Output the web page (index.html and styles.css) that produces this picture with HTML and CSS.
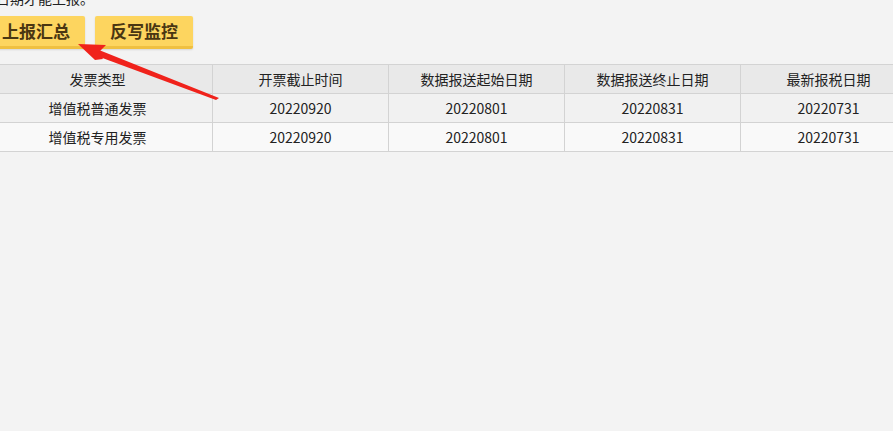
FILE: index.html
```html
<!DOCTYPE html>
<html lang="zh">
<head>
<meta charset="utf-8">
<link rel="stylesheet" href="styles.css">
</head>
<body>
<div class="page">
  <p class="note">日期才能上报。</p>
  <div class="actions">
    <button class="btn">上报汇总</button>
    <button class="btn">反写监控</button>
  </div>
  <table class="grid">
    <colgroup>
      <col class="c-first"><col class="c"><col class="c"><col class="c"><col class="c">
    </colgroup>
    <thead>
      <tr><th>发票类型</th><th>开票截止时间</th><th>数据报送起始日期</th><th>数据报送终止日期</th><th>最新报税日期</th></tr>
    </thead>
    <tbody>
      <tr class="odd"><td>增值税普通发票</td><td>20220920</td><td>20220801</td><td>20220831</td><td>20220731</td></tr>
      <tr class="even"><td>增值税专用发票</td><td>20220920</td><td>20220801</td><td>20220831</td><td>20220731</td></tr>
    </tbody>
  </table>
</div>
<svg class="arrow" width="893" height="431" viewBox="0 0 893 431">
  <polygon points="219,98 99,50 97,56 216,100" fill="#f0221b"/>
  <polygon points="78,44 106,45 99,52 103,59 95,60" fill="#f0221b"/>
</svg>
</body>
</html>
```

FILE: styles.css
```css
html, body {
  margin: 0;
  padding: 0;
}
body {
  background: #f3f3f3;
  font-family: "Microsoft YaHei", "Noto Sans CJK SC", "Noto Sans", sans-serif;
  color: #222;
  width: 893px;
  height: 431px;
  overflow: hidden;
  position: relative;
}
.page {
  margin-left: -18px;
}
.note {
  margin: -12px 0 0 14px;
  font-size: 14px;
  line-height: 20px;
  color: #222;
  height: 20px;
}
.actions {
  display: flex;
  gap: 10px;
  margin: 8px 0 0 5px;
}
.btn {
  height: 33px;
  padding: 0 15px;
  border: none;
  border-bottom: 3px solid #f0c040;
  border-radius: 2px;
  background: #fdd55f;
  color: #4a3612;
  font-family: "Microsoft YaHei", "Noto Sans CJK SC", sans-serif;
  font-size: 17px;
  font-weight: bold;
  line-height: 30px;
  box-shadow: 0 1px 2px rgba(0,0,0,0.12);
}
.grid {
  margin-top: 15px;
  border-collapse: collapse;
  table-layout: fixed;
  width: 934px;
  font-size: 14px;
  color: #222;
}
.c-first { width: 230px; }
.c { width: 176px; }
.grid th, .grid td {
  height: 28px;
  padding: 0;
  border: 1px solid #d3d3d3;
  text-align: center;
  font-weight: normal;
  line-height: 28px;
}
.grid thead tr { background: #e9e9e9; }
.grid tr.odd { background: #f1f1f1; }
.grid tr.even { background: #f9f9f9; }
.arrow {
  position: absolute;
  left: 0;
  top: 0;
  pointer-events: none;
}
```
